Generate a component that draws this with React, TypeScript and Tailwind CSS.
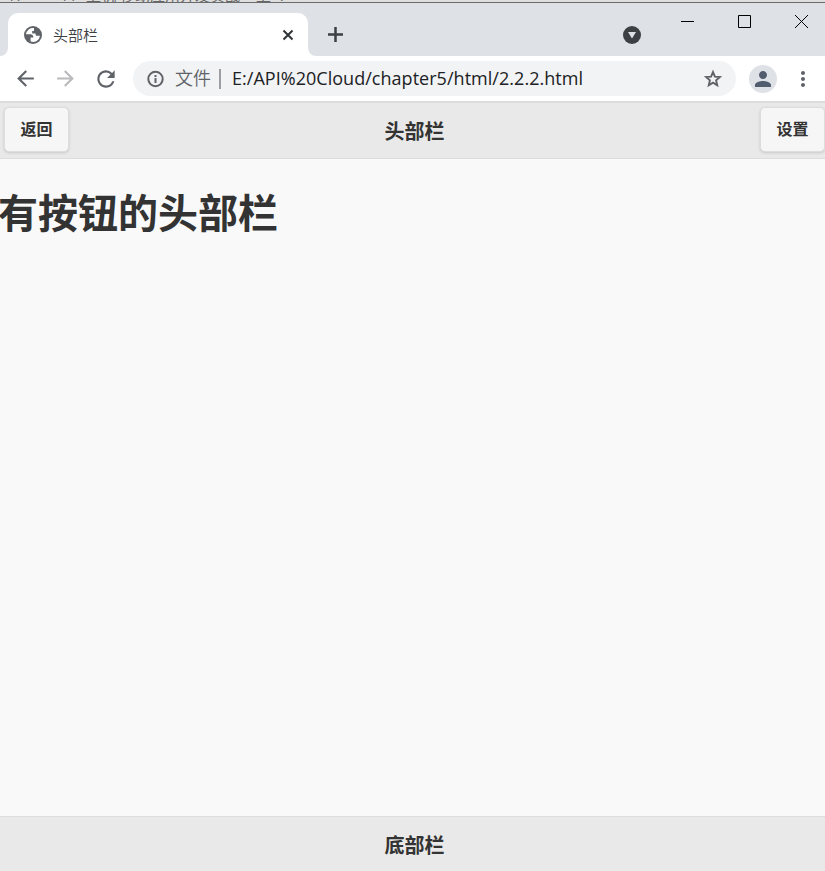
import {
  MdArrowBack,
  MdArrowForward,
  MdMoreVert,
  MdPerson,
  MdRefresh,
} from 'react-icons/md';

// Default favicon
function GlobeIcon() {
  return (
    <svg width="18" height="18" viewBox="0 0 18 18">
      <circle cx="9" cy="9" r="9" fill="#5f6368" />
      <path
        d="M10 2A7 7 0 0 0 2 8.2h4.4c1.6 0 2.9 1 2.9 2.4v.8H6.6v4.2A7 7 0 0 0 16 9.8h-2.8c-1 0-1.6-.6-1.6-1.4v-.8H8.2V4.9H10Z"
        fill="#fff"
      />
    </svg>
  );
}

// Title bar: active tab, new tab, tab search and the window controls
function TabStrip() {
  return (
    <div className="flex h-[53px] shrink-0 bg-[#dee1e6] text-[#3c4043]">
      <div className="flex w-2 items-end">
        <svg width="8" height="8" viewBox="0 0 8 8">
          <path d="M8 0v8H0a8 8 0 0 0 8-8Z" fill="#fff" />
        </svg>
      </div>
      <div className="mt-[10px] flex w-[300px] items-center rounded-t-[10px] bg-white pr-[13px] pl-4">
        <GlobeIcon />
        <span className="ml-[11px] flex-1 text-[15px] leading-5 font-[350]">头部栏</span>
        <svg width="14" height="14" viewBox="0 0 14 14" stroke="#303338" strokeWidth="2">
          <path d="M2.5 2.5l9 9M11.5 2.5l-9 9" />
        </svg>
      </div>
      <div className="flex w-2 items-end">
        <svg width="8" height="8" viewBox="0 0 8 8">
          <path d="M0 0v8h8a8 8 0 0 1-8-8Z" fill="#fff" />
        </svg>
      </div>
      <svg className="mt-[23px] ml-[11px]" width="17" height="17" viewBox="0 0 17 17" stroke="#3c4043" strokeWidth="2.5">
        <path d="M8.5 1v15M1 8.5h15" />
      </svg>
      <svg className="mt-[23px] ml-auto" width="18" height="18" viewBox="0 0 18 18">
        <circle cx="9" cy="9" r="9" fill="#3c4043" />
        <path d="M5 6h8l-4 6.4Z" fill="#dee1e6" />
      </svg>
      <div className="mt-3 mr-[17px] ml-10 flex gap-11">
        <svg width="13" height="13" viewBox="0 0 13 13" stroke="#000">
          <path d="M0 6.5h13" />
        </svg>
        <svg width="13" height="13" viewBox="0 0 13 13" stroke="#000" fill="none">
          <path d="M.5.5h12v12H.5Z" />
        </svg>
        <svg width="13" height="13" viewBox="0 0 13 13" stroke="#000">
          <path d="M0 0l13 13M13 0L0 13" />
        </svg>
      </div>
    </div>
  );
}

function Toolbar() {
  return (
    <div className="flex h-[45px] shrink-0 items-center bg-white text-[#5f6368]">
      <MdArrowBack className="ml-[13px]" size={25} />
      <MdArrowForward className="ml-[15px]" size={25} color="#bababc" />
      <MdRefresh className="ml-[15px]" size={26} />
      <div className="ml-[14px] flex h-[35px] w-[603px] items-center rounded-full bg-[#f1f3f4] pr-3 pl-[12px]">
        <svg width="21" height="20" viewBox="0 0 21 20" fill="none" stroke="#5f6368" strokeWidth="2">
          <circle cx="10.5" cy="10" r="7.2" />
          <path d="M10.5 9v5M10.5 6v2" />
        </svg>
        <span className="ml-[9px] text-[18px] font-[350]">文件</span>
        <span className="ml-[8px] h-5 w-[2px] bg-[#9a9da1]" />
        <span className="ml-[11px] flex-1 text-[18px] tracking-[0.03px] text-[#202124]">
          E:/API%20Cloud/chapter5/html/2.2.2.html
        </span>
        <svg width="22" height="22" viewBox="0 0 24 24" fill="none" stroke="#5f6368" strokeWidth="2.1">
          <path d="M12 4.4l2.1 5 5.4.5-4.1 3.6 1.2 5.3-4.6-2.8-4.6 2.8 1.2-5.3-4.1-3.6 5.4-.5Z" />
        </svg>
      </div>
      <div className="ml-[13px] flex size-7 items-center justify-center rounded-full bg-[#dee1e6]">
        <MdPerson size={24} color="#525c6f" />
      </div>
      <MdMoreVert className="ml-[14px]" size={24} />
    </div>
  );
}

function BarButton({ label }: { label: string }) {
  return (
    <button className="h-[45px] w-[65px] rounded-[5px] border border-[#ddd] bg-[#f6f6f6] pb-px text-base font-bold shadow-[0_1px_3px_rgba(0,0,0,0.15)]">
      {label}
    </button>
  );
}

export default function App() {
  return (
    <div className="flex h-[871px] w-[825px] flex-col overflow-hidden bg-[#f9f9f9] font-['Open_Sans','Noto_Sans_CJK_SC',sans-serif] text-[#333]">
      {/* Edge of the window behind */}
      <div className="h-[3px] shrink-0 overflow-hidden border-b border-[#6b6b6b] bg-[#dedede]">
        <div className="-mt-[15px] flex pl-[7px] text-[15px] leading-5 whitespace-pre text-[#666]">
          <span className="w-[53px]">17</span>
          <span className="w-[26px]">11</span>
          <span className="w-[170px]">上机 移动应用开发实战</span>
          <span>上  7</span>
        </div>
      </div>
      <TabStrip />
      <Toolbar />

      {/* Header */}
      <div className="flex h-[58px] shrink-0 justify-between border-t-2 border-b border-t-[#dcdcdc] border-b-[#ddd] bg-[#e9e9e9] pt-1 pl-1">
        <BarButton label="返回" />
        <h1 className="pt-[13px] text-[20px] leading-6 font-bold">头部栏</h1>
        <BarButton label="设置" />
      </div>

      {/* Content */}
      <div className="flex-1 overflow-hidden pt-[26px]">
        <h1 className="-ml-[2px] text-[40px] leading-[56px] font-bold">有按钮的头部栏</h1>
      </div>

      {/* Footer */}
      <div className="h-[55px] shrink-0 border-t border-[#ddd] bg-[#e9e9e9] pt-[17px] pl-1 text-center">
        <h4 className="text-[20px] leading-6 font-bold">底部栏</h4>
      </div>
    </div>
  );
}
